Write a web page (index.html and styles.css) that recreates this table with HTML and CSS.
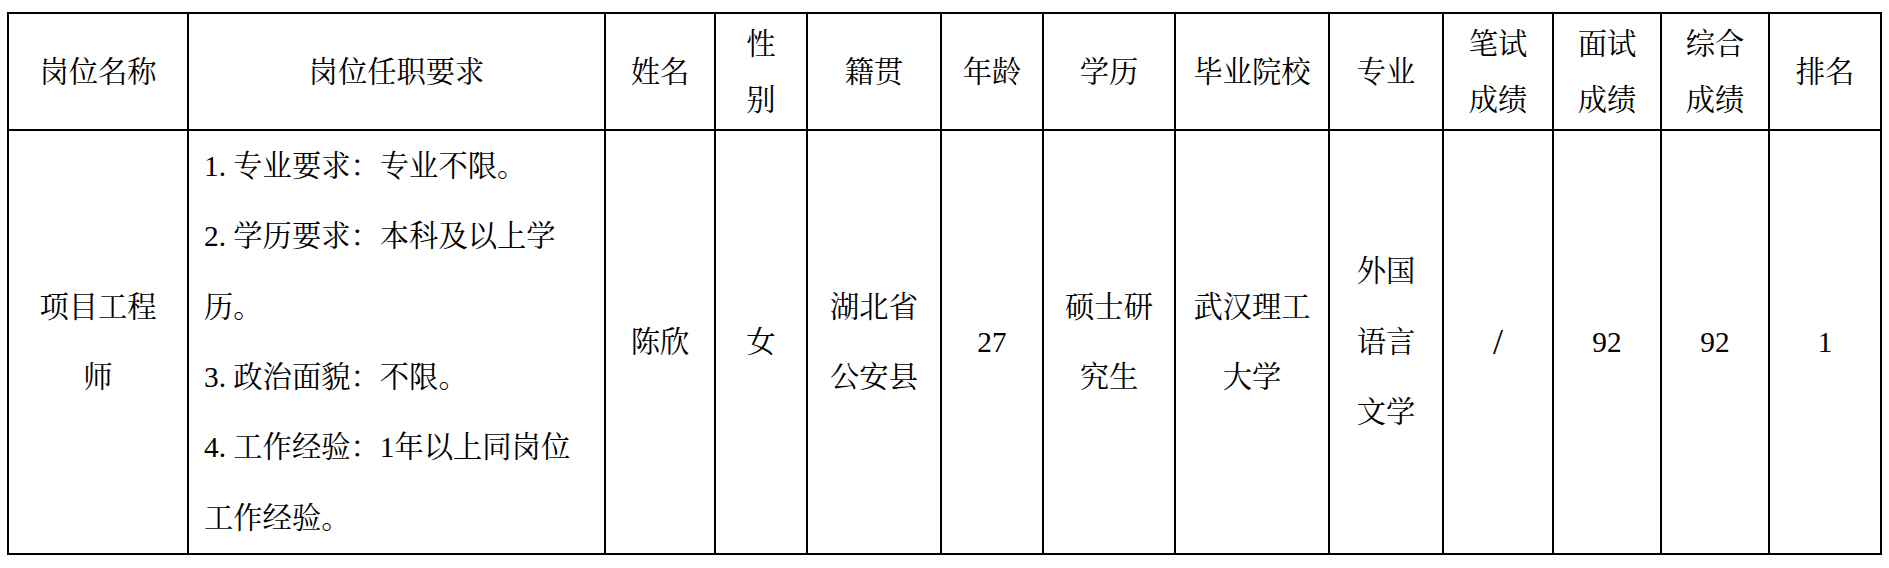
FILE: index.html
```html
<!DOCTYPE html>
<html lang="zh-CN">
<head>
<meta charset="utf-8">
<title>岗位信息</title>
<link rel="stylesheet" href="styles.css">
</head>
<body>
<div class="sheet">
  <div class="cell head">岗位名称</div>
  <div class="cell head">岗位任职要求</div>
  <div class="cell head">姓名</div>
  <div class="cell head">性<br>别</div>
  <div class="cell head">籍贯</div>
  <div class="cell head">年龄</div>
  <div class="cell head">学历</div>
  <div class="cell head">毕业院校</div>
  <div class="cell head">专业</div>
  <div class="cell head">笔试<br>成绩</div>
  <div class="cell head">面试<br>成绩</div>
  <div class="cell head">综合<br>成绩</div>
  <div class="cell head">排名</div>

  <div class="cell body">项目工程<br>师</div>
  <div class="cell body req">
    <div class="req-text">1. 专业要求：专业不限。<br>2. 学历要求：本科及以上学<br>历。<br>3. 政治面貌：不限。<br>4. 工作经验：1年以上同岗位<br>工作经验。</div>
  </div>
  <div class="cell body">陈欣</div>
  <div class="cell body">女</div>
  <div class="cell body">湖北省<br>公安县</div>
  <div class="cell body">27</div>
  <div class="cell body">硕士研<br>究生</div>
  <div class="cell body">武汉理工<br>大学</div>
  <div class="cell body">外国<br>语言<br>文学</div>
  <div class="cell body"><span class="slash">/</span></div>
  <div class="cell body">92</div>
  <div class="cell body">92</div>
  <div class="cell body">1</div>
</div>
</body>
</html>
```

FILE: styles.css
```css
html, body {
  margin: 0;
  background: #ffffff;
}

body {
  padding: 12px 7px;
  font-family: "Liberation Serif", "Noto Serif CJK SC", "Noto Sans CJK SC", serif;
  font-size: 29.3px;
  color: #000000;
}

.sheet {
  display: grid;
  grid-template-columns: 178px 415px 108px 90px 132px 100px 130px 152px 112px 108px 106px 106px 110px;
  grid-template-rows: 115px 422px;
  gap: 2px;
  padding: 2px;
  background: #000000;
  width: 1871px;
}

.cell {
  background: #ffffff;
  display: flex;
  align-items: center;
  justify-content: center;
  text-align: center;
  white-space: nowrap;
  overflow: hidden;
}

.head {
  line-height: 56px;
}

.body {
  line-height: 70.4px;
}

.req {
  justify-content: flex-start;
  text-align: left;
  padding-left: 15px;
}

.slash {
  font-family: "Liberation Serif", serif;
  font-size: 36px;
  font-weight: 300;
}
```
